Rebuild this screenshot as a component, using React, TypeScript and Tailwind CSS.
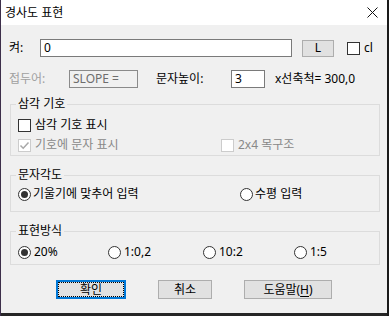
import React from "react";

function Check({ checked = false, disabled = false }: { checked?: boolean; disabled?: boolean }) {
  return (
    <span
      className={
        "w-[13px] h-[13px] shrink-0 border bg-white flex items-center justify-center " +
        (disabled ? "border-[#cccccc]" : "border-[#333333]")
      }
    >
      {checked && (
        <svg width="11" height="11" viewBox="0 0 11 11">
          <path d="M1.5 5.5 L4.2 8.2 L9.5 2.5" fill="none" stroke={disabled ? "#a8a8a8" : "#333"} strokeWidth="1.5" />
        </svg>
      )}
    </span>
  );
}

function Radio({ checked = false }: { checked?: boolean }) {
  return (
    <span className="w-[13px] h-[13px] shrink-0 rounded-full border border-[#333333] bg-white flex items-center justify-center">
      {checked && <span className="w-[7px] h-[7px] rounded-full bg-[#333333]" />}
    </span>
  );
}

function Group({ title, className = "", children }: { title: string; className?: string; children: React.ReactNode }) {
  return (
    <fieldset className={"ml-[1px] w-[370px] border border-[#dcdcdc] px-[7px] " + className}>
      <legend className="-ml-[2px] px-[2px] leading-[16px]">{title}</legend>
      {children}
    </fieldset>
  );
}

export default function App() {
  return (
    <div className="w-[389px] h-[316px] bg-[#262626] flex font-['Noto_Sans','Noto_Sans_CJK_KR',sans-serif] text-[12px] leading-[16px] text-black">
      <div className="w-[1px] h-[316px] bg-[#3d2f4a]" />
      <div className="w-[386px] h-[313px] flex flex-col bg-[#f0f0f0]">
        {/* 제목 표시줄 */}
        <div className="h-[25px] bg-white flex items-center justify-between pl-[4px] pr-[9px] shrink-0">
          <span className="text-[12px]">경사도 표현</span>
          <svg width="11" height="11" viewBox="0 0 11 11">
            <path d="M0.5 0.5 L10.5 10.5 M10.5 0.5 L0.5 10.5" stroke="#111" strokeWidth="1" />
          </svg>
        </div>

        <div className="flex flex-col pl-[8px]">
          {/* 켜 */}
          <div className="flex items-center mt-[14px] h-[18px]">
            <span className="w-[31px]">켜:</span>
            <div className="w-[252px] h-[18px] border border-[#7a7a7a] bg-white pl-[3px] flex items-center">0</div>
            <button className="ml-[10px] w-[32px] h-[17px] bg-[#e1e1e1] border border-[#adadad] flex items-center justify-center">
              L
            </button>
            <span className="ml-[13px]">
              <Check />
            </span>
            <span className="ml-[4px]">cl</span>
          </div>

          {/* 접두어 / 문자높이 */}
          <div className="flex items-center mt-[13px] h-[18px]">
            <span className="w-[60px] text-[#a0a0a0]">접두어:</span>
            <div className="w-[69px] h-[18px] border border-[#8a8a8a] bg-[#f0f0f0] pl-[3px] flex items-center text-[#6d6d6d]">
              SLOPE =
            </div>
            <span className="ml-[18px] w-[75px]">문자높이:</span>
            <div className="w-[34px] h-[18px] border border-[#7a7a7a] bg-white pl-[3px] flex items-center">3</div>
            <span className="ml-[10px]">x선축척= 300,0</span>
          </div>

          {/* 삼각 기호 */}
          <Group title="삼각 기호" className="mt-[8px]">
            <div className="flex flex-col pt-[3px]">
              <label className="h-[20px] flex items-center gap-[4px]">
                <Check />
                <span>삼각 기호 표시</span>
              </label>
              <div className="h-[20px] flex items-center text-[#888888]">
                <label className="w-[203px] flex items-center gap-[4px]">
                  <Check checked disabled />
                  <span>기호에 문자 표시</span>
                </label>
                <label className="flex items-center gap-[4px]">
                  <Check disabled />
                  <span>2x4 목구조</span>
                </label>
              </div>
            </div>
          </Group>

          {/* 문자각도 */}
          <Group title="문자각도" className="mt-[11px]">
            <div className="h-[20px] mt-[1px] mb-[7px] flex items-center">
              <label className="w-[222px] flex items-center gap-[2px]">
                <Radio checked />
                <span>기울기에 맞추어 입력</span>
              </label>
              <label className="flex items-center gap-[2px]">
                <Radio />
                <span>수평 입력</span>
              </label>
            </div>
          </Group>

          {/* 표현방식 */}
          <Group title="표현방식" className="mt-[11px]">
            <div className="h-[20px] mt-[3px] mb-[2px] flex items-center">
              <label className="w-[90px] flex items-center gap-[3px]">
                <Radio checked />
                <span>20%</span>
              </label>
              <label className="w-[95px] flex items-center gap-[3px]">
                <Radio />
                <span>1:0,2</span>
              </label>
              <label className="w-[91px] flex items-center gap-[3px]">
                <Radio />
                <span>10:2</span>
              </label>
              <label className="flex items-center gap-[3px]">
                <Radio />
                <span>1:5</span>
              </label>
            </div>
          </Group>
        </div>

        {/* 버튼 */}
        <div className="flex justify-center gap-[32px] mt-[15px]">
          <button className="w-[70px] h-[19px] bg-[#e1e1e1] border-2 border-[#0078d7] flex items-center justify-center outline-1 outline-dotted outline-black -outline-offset-3">
            확인
          </button>
          <button className="w-[54px] h-[19px] bg-[#e1e1e1] border border-[#adadad] flex items-center justify-center">
            취소
          </button>
          <button className="w-[88px] h-[19px] bg-[#e1e1e1] border border-[#adadad] flex items-center justify-center">
            도움말(<span className="underline underline-offset-2">H</span>)
          </button>
        </div>
      </div>
      <div className="w-[2px] h-[316px] bg-[#1a1a1a]" />
    </div>
  );
}
